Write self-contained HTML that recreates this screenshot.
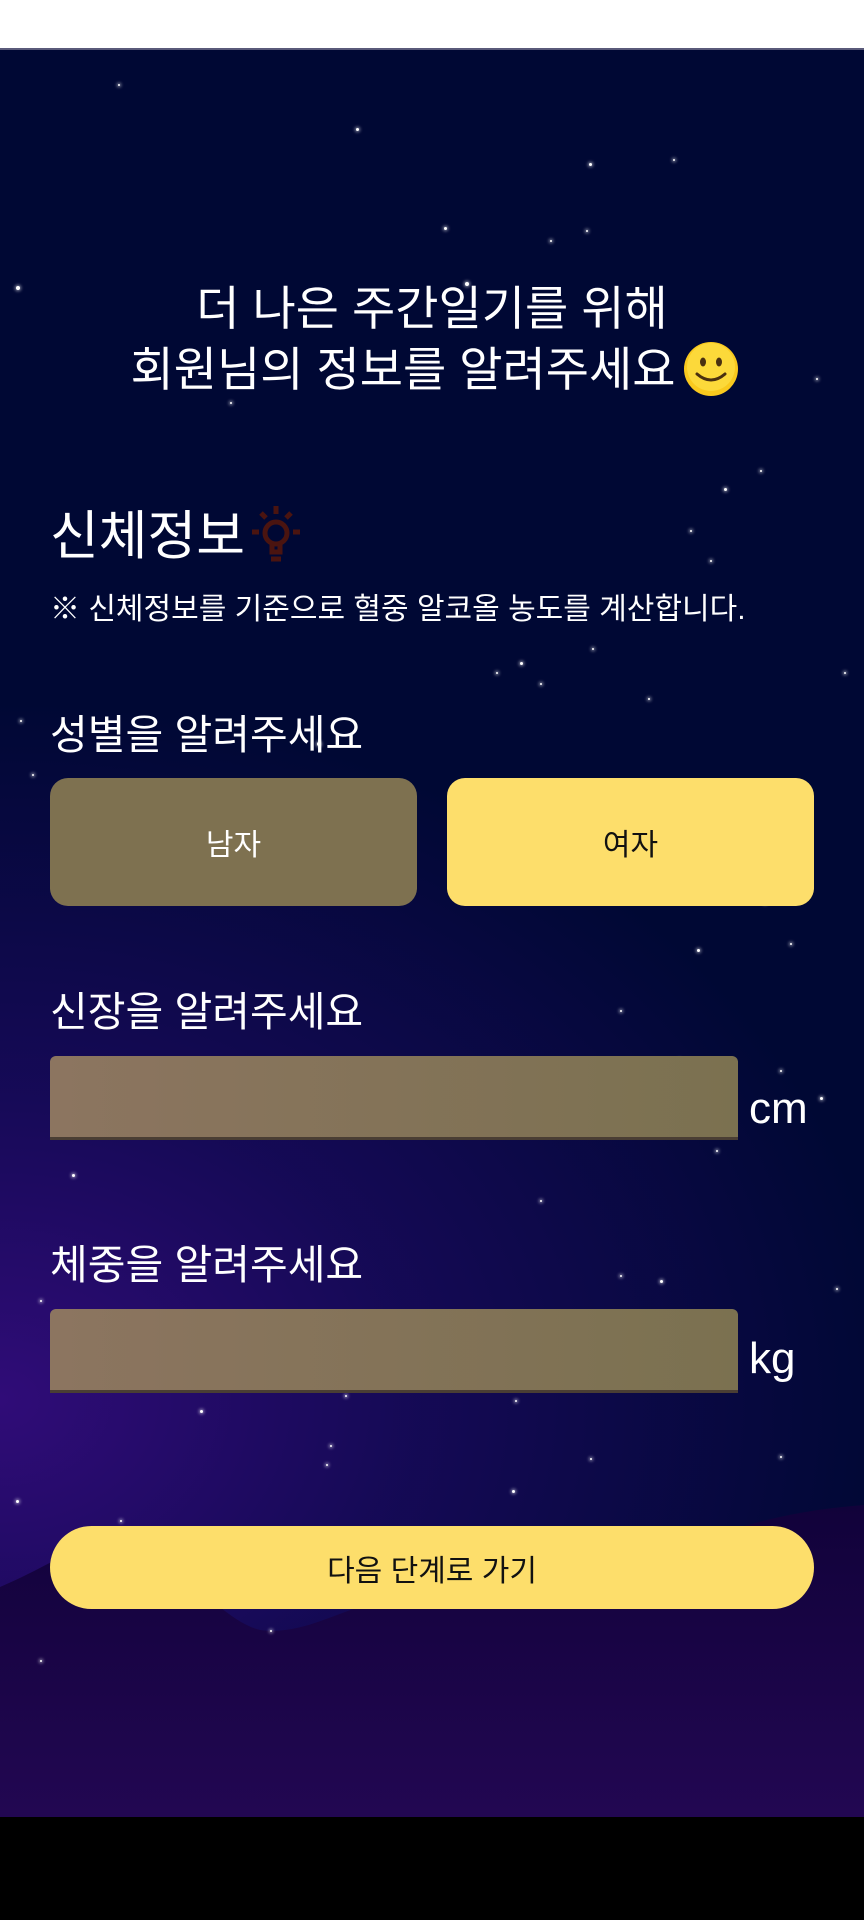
<!DOCTYPE html>
<html><head><meta charset="utf-8">
<style>
*{margin:0;padding:0;box-sizing:border-box}
body{width:864px;height:1920px;position:relative;overflow:hidden;background:#000;font-family:"Liberation Sans","Noto Sans CJK KR",sans-serif}
.top{position:absolute;left:0;top:0;width:864px;height:50px;background:#fff;border-bottom:2px solid #5a5a7a}
.bg{position:absolute;left:0;top:50px;width:864px;height:1767px;background:#000834}
.bg2{position:absolute;left:0;top:50px;width:864px;height:1767px;background:radial-gradient(ellipse 900px 700px at 0px 1350px,rgba(48,12,120,1) 0%,rgba(30,10,100,0.7) 45%,rgba(0,8,52,0) 100%);}
.t{position:absolute;color:#fff;white-space:nowrap}
.st{position:absolute;border-radius:50%;background:#fff;box-shadow:0 0 3px 1px rgba(255,255,255,.6)}
.btn{position:absolute;border-radius:18px;display:flex;align-items:center;justify-content:center;font-size:30px}
.inp{position:absolute;left:50px;width:688px;height:84px;background:linear-gradient(90deg,#8c7560,#7b7150);border-bottom:3px solid #4a3e34;border-radius:6px 6px 0 0}
</style></head><body>
<div class="top"></div>
<div class="bg"></div>
<div class="bg2"></div>
<svg style="position:absolute;left:0;top:0" width="864" height="1817">
<path d="M0 1587 C40 1570 70 1550 100 1540 L120 1532 C180 1560 220 1620 260 1630 C300 1635 330 1615 380 1600 L700 1540 C760 1520 800 1510 864 1505 L864 1817 L0 1817 Z" fill="url(#g)"/>
<defs><linearGradient id="g" x1="0" y1="0" x2="0" y2="1"><stop offset="0" stop-color="#11023a"/><stop offset="1" stop-color="#220752"/></linearGradient></defs>
</svg>
<div id="stars"></div>
<div class="t" style="left:0;width:864px;text-align:center;top:278px;font-size:47px;line-height:61px">더 나은 주간일기를 위해<br>회원님의 정보를 알려주세요<span style="display:inline-block;width:58px"></span></div>
<svg style="position:absolute;left:682px;top:340px" width="58" height="58" viewBox="0 0 58 58"><circle cx="29" cy="29" r="27" fill="#f9c91e"/><circle cx="29" cy="27" r="24" fill="#fcd93a"/><ellipse cx="21" cy="22" rx="3" ry="4.5" fill="#4a3010"/><ellipse cx="37" cy="22" rx="3" ry="4.5" fill="#4a3010"/><path d="M15 34 Q29 46 43 34" stroke="#4a3010" stroke-width="3" fill="none" stroke-linecap="round"/></svg>
<div class="t" style="left:50px;top:503px;font-size:53px;line-height:68px">신체정보</div>
<svg style="position:absolute;left:246px;top:502px" width="60" height="64" viewBox="0 0 60 64" fill="none" stroke="#4a1410" stroke-width="5"><circle cx="30" cy="31" r="11"/><path d="M26 41v9h8v-9M25 57h10M30 4v8M15 11l5 5M45 11l-5 5M6 30h7M47 30h7"/></svg>
<div class="t" style="left:50px;top:591px;font-size:30px;line-height:38px">※ 신체정보를 기준으로 혈중 알코올 농도를 계산합니다.</div>
<div class="t" style="left:50px;top:710px;font-size:41px;line-height:50px">성별을 알려주세요</div>
<div class="btn" style="left:50px;top:778px;width:367px;height:128px;background:#7e7150;color:#fff">남자</div>
<div class="btn" style="left:447px;top:778px;width:367px;height:128px;background:#fdde6b;color:#111">여자</div>
<div class="t" style="left:50px;top:987px;font-size:41px;line-height:50px">신장을 알려주세요</div>
<div class="inp" style="top:1056px"></div>
<div class="t" style="left:749px;top:1084px;font-size:44px;line-height:50px">cm</div>
<div class="t" style="left:50px;top:1240px;font-size:41px;line-height:50px">체중을 알려주세요</div>
<div class="inp" style="top:1309px"></div>
<div class="t" style="left:749px;top:1334px;font-size:44px;line-height:50px">kg</div>
<div class="btn" style="left:50px;top:1526px;width:764px;height:83px;border-radius:42px;background:#fdde6b;color:#111">다음 단계로 가기</div>
<script>
var s=[[118,84,2],[356,128,3],[589,163,3],[673,159,2],[16,286,4],[465,282,4],[586,230,2],[444,227,3],[230,402,2],[816,378,2],[724,488,3],[592,648,2],[520,662,3],[496,672,2],[540,683,2],[648,698,2],[20,720,2],[844,672,2],[317,742,4],[355,813,2],[32,774,2],[692,893,3],[729,900,2],[764,902,2],[697,949,3],[790,943,2],[678,1059,3],[820,1097,3],[660,1087,3],[716,1150,2],[72,1174,3],[660,1280,3],[620,1275,2],[836,1288,2],[40,1300,2],[100,1330,2],[515,1400,2],[330,1445,2],[200,1410,3],[345,1395,2],[16,1500,3],[120,1520,2],[326,1464,2],[512,1490,3],[590,1458,2],[780,1456,2],[270,1630,2],[240,1560,2],[540,1200,2],[620,1010,2],[780,1070,2],[40,1660,2],[550,240,2],[690,530,2],[710,560,2],[760,470,2]];
var h='';s.forEach(function(a){h+='<div class="st" style="left:'+a[0]+'px;top:'+a[1]+'px;width:'+a[2]+'px;height:'+a[2]+'px"></div>'});document.getElementById('stars').innerHTML=h;
</script>
</body></html>
